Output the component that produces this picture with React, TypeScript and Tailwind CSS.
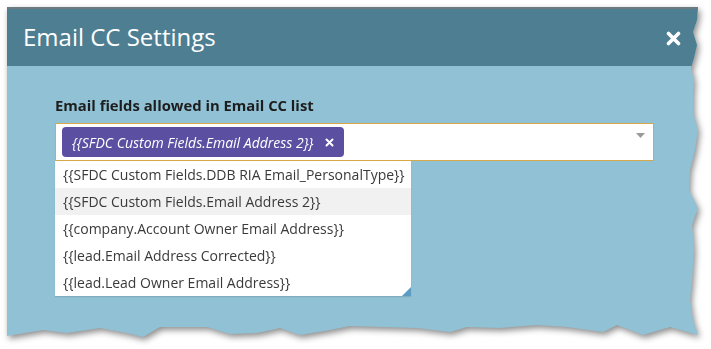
import React from 'react'

const options = [
  '{{SFDC Custom Fields.DDB RIA Email_PersonalType}}',
  '{{SFDC Custom Fields.Email Address 2}}',
  '{{company.Account Owner Email Address}}',
  '{{lead.Email Address Corrected}}',
  '{{lead.Lead Owner Email Address}}',
]

export default function App() {
  return (
    <div className="w-[711px] h-[349px] bg-white overflow-hidden pt-[7px] pl-[7px] font-['Open_Sans',sans-serif]">
      <div className="[filter:drop-shadow(2px_3px_3px_rgba(0,0,0,0.45))]">
        <div className="w-[692px] h-[332px] flex flex-col bg-[#91c1d4] [clip-path:polygon(0_0,691px_0,690px_13px,686px_25px,690px_38px,687px_51px,684px_61px,687px_73px,686px_88px,686px_105px,691px_123px,688px_143px,683px_163px,682px_183px,691px_201px,685px_218px,687px_243px,685px_273px,683px_293px,686px_313px,691px_328px,663px_320px,636px_328px,610px_318px,596px_325px,560px_320px,530px_318px,493px_321px,460px_320px,443px_325px,410px_321px,376px_320px,343px_319px,323px_323px,293px_328px,273px_321px,250px_326px,223px_327px,200px_320px,153px_320px,136px_330px,120px_326px,93px_321px,60px_326px,36px_323px,0_329px)]">
          <div className="h-[59px] shrink-0 bg-[#4e7e91] border-t-2 border-[#6d7a80] flex items-center justify-between pl-[16px] pr-[18px]">
            <h1 className="text-[24px] text-white leading-none pb-[1px]">Email CC Settings</h1>
            <button className="text-white mt-[2px]">
              <svg width="15" height="15" viewBox="0 0 15 15">
                <path d="M2.5 2.5 L12.5 12.5 M12.5 2.5 L2.5 12.5" stroke="white" strokeWidth="3.6" strokeLinecap="round" />
              </svg>
            </button>
          </div>

          <div className="flex-1 pl-[48px] pt-[30px]">
            <label className="block text-[14.8px] leading-[19px] font-bold text-[#1d1d1d] mb-[8px]">
              Email fields allowed in Email CC list
            </label>

            <div className="w-[599px] h-[38px] bg-white border border-[#d6a848] flex items-start justify-between pl-[6px] pt-[3px] pr-[8px]">
              <span className="h-[30px] rounded-[4px] bg-[#5b4fa2] text-white flex items-center pl-[10px] pr-[10px] gap-[12px]">
                <span className="text-[14px] italic">{'{{SFDC Custom Fields.Email Address 2}}'}</span>
                <svg width="9" height="9" viewBox="0 0 9 9">
                  <path d="M1.5 1.5 L7.5 7.5 M7.5 1.5 L1.5 7.5" stroke="white" strokeWidth="2" strokeLinecap="round" />
                </svg>
              </span>
              <svg width="9" height="5" viewBox="0 0 9 5" className="mt-[6px]">
                <path d="M0 0 H9 L4.5 5 Z" fill="#9a9a9a" />
              </svg>
            </div>

            <ul className="relative w-[356px] bg-white shadow-[0_1px_1px_rgba(0,0,0,0.1)]">
              {options.map((o, i) => (
                <li
                  key={o}
                  className={`h-[27px] flex items-center pl-[8px] text-[14px] text-[#3a3a3a] ${i === 1 ? 'bg-[#f1f1f1]' : ''}`}
                >
                  {o}
                </li>
              ))}
              <span className="absolute right-0 bottom-0 w-0 h-0 border-l-[9px] border-l-transparent border-b-[9px] border-b-[#5b9cc4]" />
            </ul>
          </div>
        </div>
      </div>
    </div>
  )
}
